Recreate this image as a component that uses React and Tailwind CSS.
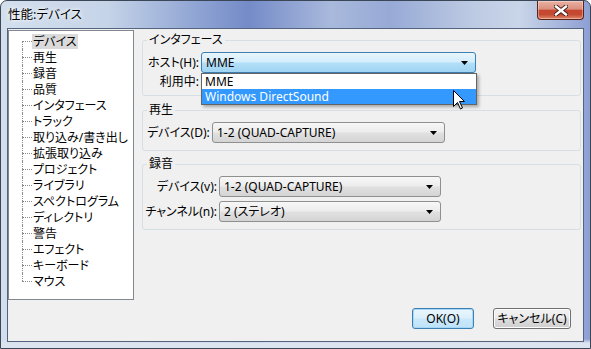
import React from "react";

const treeItems = [
  "デバイス",
  "再生",
  "録音",
  "品質",
  "インタフェース",
  "トラック",
  "取り込み/書き出し",
  "拡張取り込み",
  "プロジェクト",
  "ライブラリ",
  "スペクトログラム",
  "ディレクトリ",
  "警告",
  "エフェクト",
  "キーボード",
  "マウス",
];

const Arrow = () => (
  <svg width="7" height="4" viewBox="0 0 7 4" className="shrink-0">
    <path d="M0 0H7L3.5 4Z" fill="#000" />
  </svg>
);

// Win7 style combo box
const ComboBox = ({ value, className, active, children }) => (
  <div
    className={`relative flex h-[21px] shrink-0 items-center justify-between rounded-[3px] border pl-[4px] pr-[7px] ${
      active
        ? "border-[#3c7fb1] bg-[linear-gradient(#eaf6fd,#d3eefc_45%,#b2def8_55%,#9fd4f2)]"
        : "border-[#8e8f8f] bg-[linear-gradient(#f7f7f7,#ededed_45%,#e0e0e0_55%,#d4d4d4)]"
    } ${className}`}
  >
    <span className="leading-[16px] text-black">{value}</span>
    <Arrow />
    {children}
  </div>
);

const Cursor = () => (
  <svg width="12" height="20" viewBox="0 0 12 20" className="absolute left-[251px] top-[16px]">
    <path
      d="M0.5 0.5V16.5L4.5 12.5L7.5 19L9.5 18L6.5 11.5H11.5Z"
      fill="#fff"
      stroke="#000"
      strokeWidth="1"
      strokeLinejoin="miter"
    />
  </svg>
);

export default function App() {
  return (
    <div className="w-[591px] h-[349px] font-['Noto_Sans','Noto_Sans_CJK_JP',sans-serif] [font-feature-settings:'palt'] text-[12px] text-black">
      {/* Window frame */}
      <div className="flex h-full flex-col rounded-t-[7px] border border-[#3b4656] bg-[linear-gradient(to_bottom,transparent_0,transparent_338px,#dbe4ef_342px),linear-gradient(to_right,#d3dfed_0%,#c6d4e8_18%,#93a8d5_32%,#748bc8_42%,#a9b9dc_56%,#97aad6_66%,#bdcae3_80%,#c9d5e8_88%,#8d9fd3_100%)] px-[6px] pb-[6px]">
        {/* Title bar */}
        <div className="flex h-[27px] shrink-0 items-start justify-between">
          <div className="ml-[1px] mt-[5px] leading-[18px] text-[12.5px] [text-shadow:0_0_6px_#fff,0_0_3px_#fff]">
            性能:デバイス
          </div>
          <div className="flex h-[19px] w-[47px] items-center justify-center rounded-b-[4px] border border-t-0 border-[#5b2419] bg-[linear-gradient(#eab1a3_0%,#dc8f7c_45%,#c6462e_52%,#c34a31_75%,#e0876a_100%)] shadow-[inset_0_0_0_1px_rgba(255,255,255,0.35)]">
            <svg width="14" height="11" viewBox="0 0 14 11">
              <path d="M2 1.5L12 9.5M12 1.5L2 9.5" stroke="#3a1a14" strokeWidth="4.2" strokeLinecap="square" />
              <path d="M2 1.5L12 9.5M12 1.5L2 9.5" stroke="#fff" strokeWidth="2.4" strokeLinecap="square" />
            </svg>
          </div>
        </div>

        {/* Client area */}
        <div className="flex flex-1 flex-col border border-[#55647e] bg-[#f0f0f0]">
          <div className="flex h-[271px]">
            {/* Tree */}
            <div className="mt-[1px] h-[270px] w-[126px] shrink-0 border border-[#828790] bg-white pl-[13px] pt-[2px]">
              {treeItems.map((t, i) => (
                <div key={t} className="flex h-[16px] items-center">
                  <div className="relative h-full w-[10px] shrink-0">
                    <div
                      className={`absolute left-0 border-l border-dotted border-[#8c8c8c] ${
                        i === 0 ? "top-1/2" : "top-0"
                      } ${i === treeItems.length - 1 ? "bottom-1/2" : "bottom-0"}`}
                    />
                    <div className="absolute left-0 top-1/2 w-full border-t border-dotted border-[#8c8c8c]" />
                  </div>
                  <span className={`whitespace-nowrap px-[1px] leading-[15px] ${i === 0 ? "bg-[#dadada]" : ""}`}>
                    {t}
                  </span>
                </div>
              ))}
            </div>

            {/* Settings panel */}
            <div className="ml-[8px] flex w-[439px] flex-col pt-[3px]">
              <fieldset className="rounded-[3px] border border-[#d5dfe5] p-0 pb-[5px]">
                <legend className="ml-[4px] px-[2px] leading-[16px]">インタフェース</legend>
                <div className="mt-[4px] flex items-center">
                  <span className="w-[56px] whitespace-nowrap text-right">ホスト(H):</span>
                  <ComboBox value="MME" active className="ml-[2px] w-[275px]">
                    <div className="absolute left-[-1px] top-[20px] z-10 w-[276px] border border-[#646464] bg-white shadow-[2px_2px_3px_rgba(0,0,0,0.3)]">
                      <div className="flex h-[15px] items-center pl-[3px] leading-[15px]">MME</div>
                      <div className="flex h-[15px] items-center bg-[#3399ff] pl-[3px] leading-[15px] text-white">
                        Windows DirectSound
                      </div>
                      <Cursor />
                    </div>
                  </ComboBox>
                </div>
                <div className="mt-[1px] flex h-[16px] items-center">
                  <span className="w-[56px] whitespace-nowrap text-right">利用中:</span>
                </div>
              </fieldset>

              <fieldset className="mt-[6px] rounded-[3px] border border-[#d5dfe5] p-0 pb-[7px]">
                <legend className="ml-[4px] px-[2px] leading-[16px]">再生</legend>
                <div className="mt-[4px] flex items-center">
                  <span className="w-[69px] whitespace-nowrap pl-[4px]">デバイス(D):</span>
                  <ComboBox value="1-2 (QUAD-CAPTURE)" className="w-[233px]" />
                </div>
              </fieldset>

              <fieldset className="mt-[5px] rounded-[3px] border border-[#d5dfe5] p-0 pb-[7px]">
                <legend className="ml-[4px] px-[2px] leading-[16px]">録音</legend>
                <div className="mt-[4px] flex items-center">
                  <span className="w-[74px] whitespace-nowrap text-right">デバイス(v):</span>
                  <ComboBox value="1-2 (QUAD-CAPTURE)" className="ml-[2px] w-[222px]" />
                </div>
                <div className="mt-[4px] flex items-center">
                  <span className="w-[74px] whitespace-nowrap text-right">チャンネル(n):</span>
                  <ComboBox value="2 (ステレオ)" className="ml-[2px] w-[222px]" />
                </div>
              </fieldset>
            </div>
          </div>

          {/* Buttons */}
          <div className="mt-[8px] flex justify-end gap-[19px] pr-[12px]">
            <button className="h-[21px] w-[62px] rounded-[3px] border border-[#3c7fb1] bg-[linear-gradient(#eaf6fd,#dcf0fc_45%,#cae8fb_55%,#bfe2f8)] leading-[16px] shadow-[inset_0_0_0_1px_#a8d8f8]">
              OK(O)
            </button>
            <button className="h-[21px] w-[78px] rounded-[3px] border border-[#707070] bg-[linear-gradient(#f2f2f2,#ebebeb_45%,#dddddd_55%,#cfcfcf)] leading-[16px] shadow-[inset_0_0_0_1px_#fcfcfc]">
              キャンセル(C)
            </button>
          </div>
        </div>
      </div>
    </div>
  );
}
